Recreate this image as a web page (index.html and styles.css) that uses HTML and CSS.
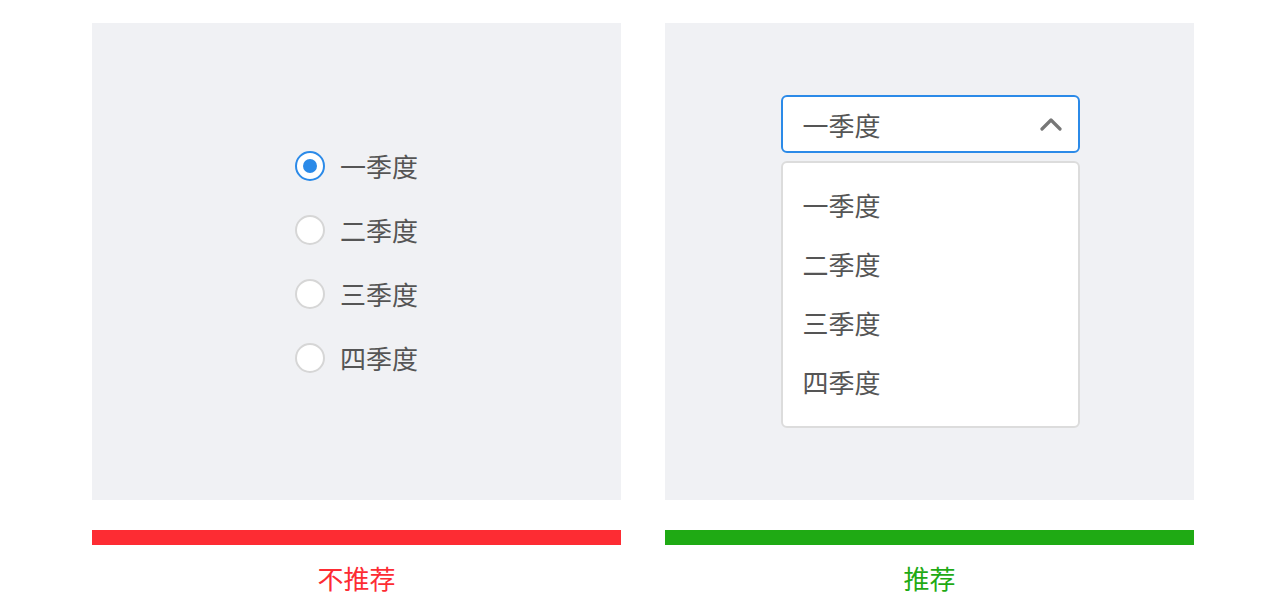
FILE: index.html
```html
<!DOCTYPE html>
<html lang="zh">

<head>
	<meta charset="UTF-8">
	<meta name="viewport" content="width=device-width, initial-scale=1.0">
	<title>Document</title>
	<link rel="stylesheet" href="styles.css">
</head>

<body>
	<div class="wrap">
		<div class="col">
			<div class="panel">
				<ul class="radios">
					<li class="checked"><i class="dot"></i>一季度</li>
					<li><i class="dot"></i>二季度</li>
					<li><i class="dot"></i>三季度</li>
					<li><i class="dot"></i>四季度</li>
				</ul>
			</div>
			<div class="bar bad"></div>
			<p class="tag bad">不推荐</p>
		</div>
		<div class="col">
			<div class="panel">
				<div class="picker">
					<div class="select">
						<span>一季度</span>
						<svg width="22" height="14" viewBox="0 0 22 14">
							<polyline points="2,12 11,3 20,12" fill="none" stroke="#777" stroke-width="3.2" stroke-linecap="round" stroke-linejoin="round" />
						</svg>
					</div>
					<ul class="menu">
						<li>一季度</li>
						<li>二季度</li>
						<li>三季度</li>
						<li>四季度</li>
					</ul>
				</div>
			</div>
			<div class="bar good"></div>
			<p class="tag good">推荐</p>
		</div>
	</div>
</body>

</html>
```

FILE: styles.css
```css
* {
	padding: 0;
	margin: 0;
	list-style: none;
	border: 0;
	box-sizing: border-box;
}

body {
	background: #fff;
	font-family: "Noto Sans CJK SC", "Noto Sans", sans-serif;
	color: #555;
}

.wrap {
	display: flex;
	justify-content: center;
	gap: 44px;
	padding-top: 23px;
}

.col {
	width: 529px;
}

.panel {
	height: 477px;
	background: #f0f1f4;
	display: flex;
	align-items: center;
	justify-content: center;
}

.radios li {
	display: flex;
	align-items: center;
	height: 64px;
	font-size: 26px;
	line-height: 1;
}

.radios .dot {
	width: 30px;
	height: 30px;
	border-radius: 50%;
	border: 2px solid #d6d6d6;
	background: #fff;
	margin-right: 15px;
	position: relative;
}

.radios .checked .dot {
	border-color: #2b8ae8;
}

.radios .checked .dot::after {
	content: "";
	position: absolute;
	left: 6px;
	top: 6px;
	width: 14px;
	height: 14px;
	border-radius: 50%;
	background: #2b8ae8;
}

.picker {
	width: 299px;
	margin-left: 1px;
}

.select {
	height: 58px;
	background: #fff;
	border: 2px solid #2b8ae8;
	border-radius: 6px;
	display: flex;
	align-items: center;
	justify-content: space-between;
	padding: 0 16px 0 20px;
	font-size: 26px;
}

.menu {
	margin-top: 8px;
	height: 267px;
	background: #fff;
	border: 2px solid #dcdcdc;
	border-radius: 6px;
	padding: 12px 20px 19px;
}

.menu li {
	height: 59px;
	line-height: 59px;
	font-size: 26px;
}

.bar {
	height: 15px;
	margin-top: 30px;
}

.bar.bad {
	background: #fd2c33;
}

.bar.good {
	background: #1faa14;
}

.tag {
	text-align: center;
	font-size: 26px;
	line-height: 36px;
	margin-top: 15px;
}

.tag.bad {
	color: #fd2c33;
}

.tag.good {
	color: #1faa14;
}
```
